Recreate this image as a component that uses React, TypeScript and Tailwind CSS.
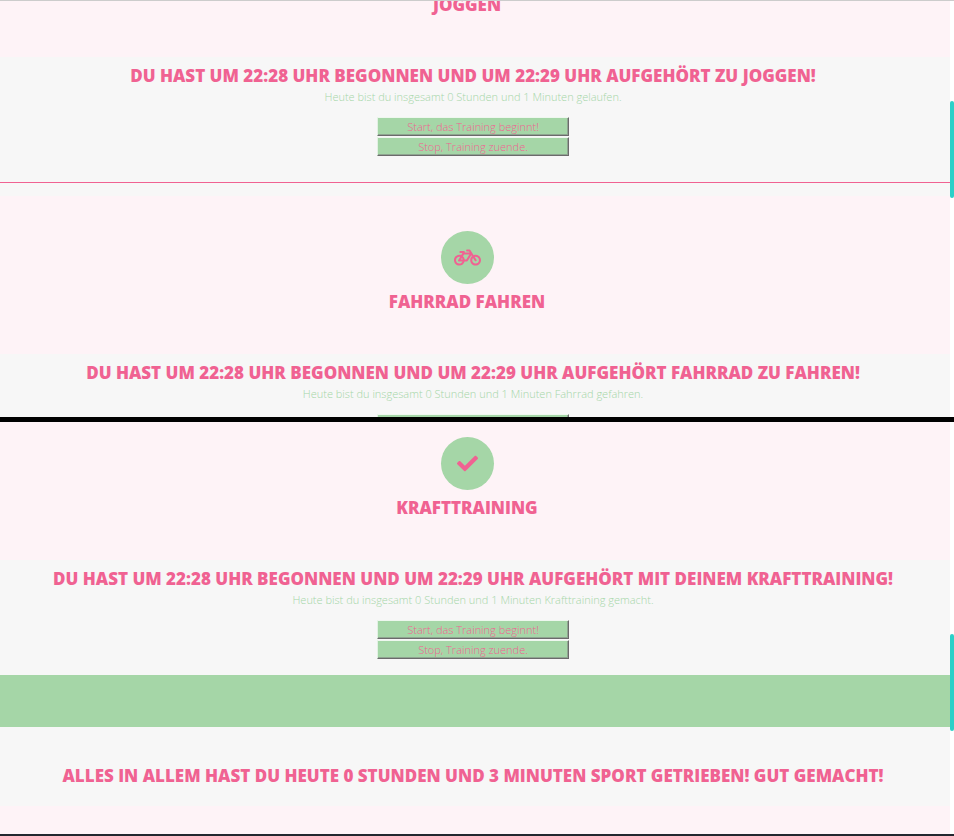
import type { ReactNode } from "react";
import { FaBicycle, FaCheck } from "react-icons/fa";

const buttonBase =
  "block h-[19px] w-48 border border-t-[#eef7ee] border-l-[#e2f1e3] border-r-[#6b6b6b] border-b-[#6b6b6b] bg-[#a5d6a7] text-center text-[11px] leading-[17px] font-[350] shadow-[inset_-1px_-1px_#8fa591]";

function TrainingButtons() {
  return (
    <div className="mx-auto mt-3 flex w-48 flex-col gap-px">
      <button type="button" className={buttonBase}>Start, das Training beginnt!</button>
      <button type="button" className={buttonBase}>Stop, Training zuende.</button>
    </div>
  );
}

function Title({ children }: { children: ReactNode }) {
  return <h2 className="text-center text-[17px] leading-6 font-extrabold whitespace-nowrap uppercase">{children}</h2>;
}

function SportHeader({ icon, name }: { icon?: ReactNode; name: string }) {
  return (
    <header className="pr-4">
      {icon && (
        <div className="mx-auto mb-1.5 flex size-[53px] items-center justify-center rounded-full bg-[#a5d6a7]">
          {icon}
        </div>
      )}
      <Title>{name}</Title>
    </header>
  );
}

function Summary({ title, children }: { title: string; children: ReactNode }) {
  return (
    <>
      <Title>{title}</Title>
      <p className="text-center text-[11px] leading-[17px] font-[350] text-[#a5d6a7]">{children}</p>
    </>
  );
}

function Pane({ className, thumb, children }: { className: string; thumb: string; children: ReactNode }) {
  return (
    <section className={`flex overflow-hidden ${className}`}>
      <div className="min-w-0 flex-1 overflow-hidden">{children}</div>
      <div className="w-1 shrink-0 bg-white">
        <div className={`rounded-sm bg-[#2bd0c8] ${thumb}`} />
      </div>
    </section>
  );
}

export default function App() {
  return (
    <main className="bg-[#fef3f7] font-['Open_Sans','Noto_Sans',sans-serif] text-[#f06292]">
      <Pane className="h-[417px] border-t border-[#cccccc]" thumb="mt-[100px] h-[97px]">
        <div className="-mt-2 pb-10">
          <SportHeader name="Joggen" />
        </div>
        <div className="bg-[#f7f7f7] pt-[7px] pr-1 pb-[26px]">
          <Summary title="Du hast um 22:28 Uhr begonnen und um 22:29 Uhr aufgehört zu joggen!">
            Heute bist du insgesamt 0 Stunden und 1 Minuten gelaufen.
          </Summary>
          <TrainingButtons />
        </div>
        <hr className="h-px border-0 bg-[#f06292]" />
        <div className="h-[13px] bg-[#f7f7f7]" />
        <div className="pt-[35px] pb-10">
          <SportHeader icon={<FaBicycle size={27} />} name="Fahrrad fahren" />
        </div>
        <div className="bg-[#f7f7f7] pt-[7px] pr-1">
          <Summary title="Du hast um 22:28 Uhr begonnen und um 22:29 Uhr aufgehört Fahrrad zu fahren!">
            Heute bist du insgesamt 0 Stunden und 1 Minuten Fahrrad gefahren.
          </Summary>
          <TrainingButtons />
        </div>
      </Pane>
      <div className="h-[5px] bg-black" />
      <Pane className="h-[414px] border-b-2 border-[#22262e]" thumb="mt-[212px] h-[97px]">
        <div className="pt-[15px] pb-10">
          <SportHeader icon={<FaCheck size={21} />} name="Krafttraining" />
        </div>
        <div className="bg-[#f7f7f7] pt-[7px] pr-1 pb-4">
          <Summary title="Du hast um 22:28 Uhr begonnen und um 22:29 Uhr aufgehört mit deinem Krafttraining!">
            Heute bist du insgesamt 0 Stunden und 1 Minuten Krafttraining gemacht.
          </Summary>
          <TrainingButtons />
        </div>
        <div className="h-[52px] bg-[#a5d6a7]" />
        <div className="bg-[#f7f7f7] pt-[37px] pr-1 pb-[18px]">
          <Title>Alles in allem hast du heute 0 Stunden und 3 Minuten Sport getrieben! Gut gemacht!</Title>
        </div>
      </Pane>
    </main>
  );
}
